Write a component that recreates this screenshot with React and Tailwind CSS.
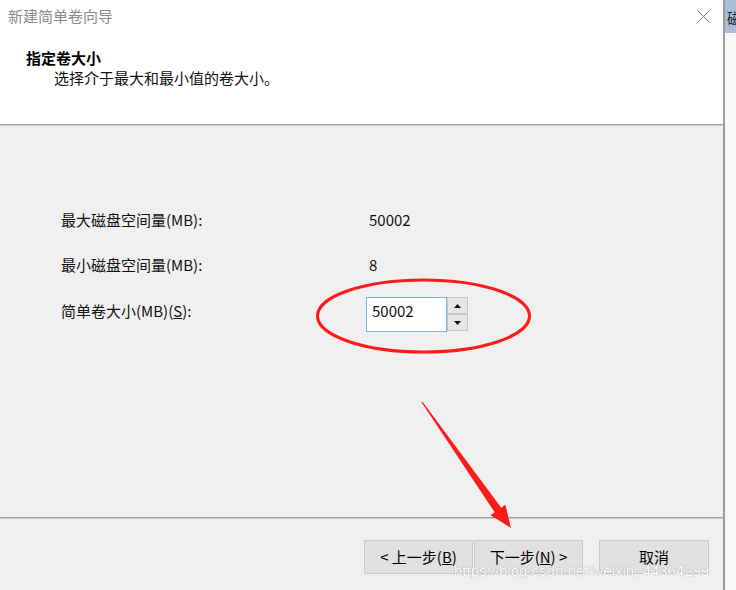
import React from "react";

const font = { fontFamily: '"Noto Sans CJK SC", "Noto Sans", sans-serif' };

const SpinButton = ({ up }) => (
  <div className="flex-1 flex items-center justify-center bg-[#e6e6e6] border border-[#c8c8c8]">
    <svg width="7" height="4" viewBox="0 0 7 4">
      {up ? <polygon points="3.5,0 7,4 0,4" fill="#111" /> : <polygon points="0,0 7,0 3.5,4" fill="#111" />}
    </svg>
  </div>
);

const WinButton = ({ children, className = "" }) => (
  <button className={`h-[34px] bg-[#e1e1e1] border border-[#cbcbcb] text-[15px] leading-[20px] text-black flex items-center justify-center ${className}`}>
    {children}
  </button>
);

export default function App() {
  return (
    <div className="relative w-[736px] h-[590px] flex overflow-hidden bg-white" style={font}>
      <div className="w-[723px] shrink-0 flex flex-col">
        <div className="h-[124px] bg-white relative">
          <div className="pt-[6px] pl-[8px] text-[15px] leading-[20px] text-[#8a8a8a]">新建简单卷向导</div>
          <div className="absolute left-[697px] top-[10px]">
            <svg width="13" height="13" viewBox="0 0 13 13">
              <path d="M0.5 0.5 L12.5 12.5 M12.5 0.5 L0.5 12.5" stroke="#7a7a7a" strokeWidth="1" />
            </svg>
          </div>
          <div className="pt-[22px] pl-[26px] text-[15px] leading-[20px] font-bold text-black">指定卷大小</div>
          <div className="pl-[54px] text-[15px] leading-[20px] text-[#111]">选择介于最大和最小值的卷大小。</div>
        </div>
        <div className="h-[1px] bg-[#a0a0a0]" />
        <div className="h-[1px] bg-[#d0d0d0]" />
        <div className="flex-1 bg-[#f0f0f0] pt-[84px] pl-[61px] text-[15px] leading-[20px] text-[#111]">
          <div className="flex">
            <div className="w-[308px]">最大磁盘空间量(MB):</div>
            <div>50002</div>
          </div>
          <div className="flex mt-[25px]">
            <div className="w-[308px]">最小磁盘空间量(MB):</div>
            <div>8</div>
          </div>
          <div className="flex items-start mt-[22px]">
            <div className="w-[305px] mt-[4px]">
              简单卷大小(MB)(<span className="underline">S</span>):
            </div>
            <div className="w-[81px] h-[35px] bg-white border border-[#7eb4ea] pl-[5px] pt-[3px]">50002</div>
            <div className="w-[21px] h-[34px] flex flex-col">
              <SpinButton up />
              <SpinButton />
            </div>
          </div>
        </div>
        <div className="h-[1px] bg-[#a0a0a0]" />
        <div className="h-[1px] bg-[#d0d0d0]" />
        <div className="h-[71px] bg-[#f0f0f0] flex justify-end items-start pt-[21px] pr-[14px]">
          <WinButton className="w-[109px]">&lt; 上一步(<span className="underline">B</span>)</WinButton>
          <WinButton className="w-[109px] ml-[1px]">下一步(<span className="underline">N</span>) &gt;</WinButton>
          <WinButton className="w-[110px] ml-[16px]">取消</WinButton>
        </div>
      </div>
      <div className="w-[2px] shrink-0 bg-[#9c9c9c]" />
      <div className="flex-1 min-w-0 flex flex-col bg-[#f7f7f7]">
        <div className="h-[33px] bg-[#a9bed8] overflow-hidden pl-[2px] pt-[8px] text-[15px] leading-[20px] text-[#222] whitespace-nowrap">磁</div>
      </div>

      <svg className="absolute left-0 top-0 pointer-events-none" width="736" height="590" viewBox="0 0 736 590">
        <ellipse cx="423.5" cy="316" rx="106" ry="36" fill="none" stroke="#ff1a1a" strokeWidth="3" />
        <polygon
          points="421.5,402.3 422.5,401.7 501.3,507.7 505.4,504.8 511,528 490.6,515.2 494.7,512.3"
          fill="#ff1a1a"
        />
      </svg>
      <div
        className="absolute left-[454px] top-[561px] text-[15px] leading-[20px] text-white whitespace-nowrap [text-shadow:0_0_1px_rgba(0,0,0,0.45)]"
        style={{ fontFamily: '"Liberation Sans", Arial, sans-serif' }}
      >
        https://blog.csdn.net/weixin_44364299
      </div>
    </div>
  );
}
